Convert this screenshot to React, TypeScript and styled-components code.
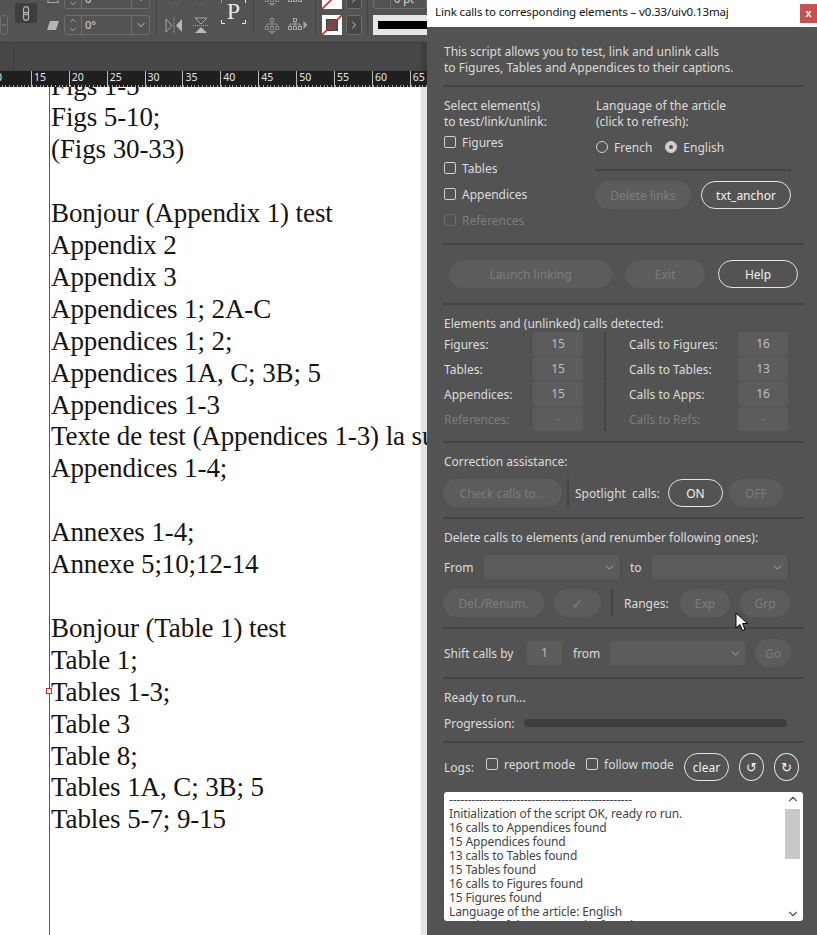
import styled, { createGlobalStyle } from "styled-components";
import { ChevronDown, ChevronRight, ChevronUp } from "lucide-react";

const GlobalStyle = createGlobalStyle`
    html, body {
        margin: 0;
        padding: 0;
        background: #535353;
    }
`;

const DOC_LINES = [
    "Figs 1-5",
    "Figs 5-10;",
    "(Figs 30-33)",
    "",
    "Bonjour (Appendix 1) test",
    "Appendix 2",
    "Appendix 3",
    "Appendices 1; 2A-C",
    "Appendices 1; 2;",
    "Appendices 1A, C; 3B; 5",
    "Appendices 1-3",
    "Texte de test (Appendices 1-3) la suite",
    "Appendices 1-4;",
    "",
    "Annexes 1-4;",
    "Annexe 5;10;12-14",
    "",
    "Bonjour (Table 1) test",
    "Table 1;",
    "Tables 1-3;",
    "Table 3",
    "Table 8;",
    "Tables 1A, C; 3B; 5",
    "Tables 5-7; 9-15",
];

const RULER_MARKS = [0, 15, 20, 25, 30, 35, 40, 45, 50, 55, 60, 65];

const LOG_LINES = [
    "-------------------------------------------------",
    "Initialization of the script OK, ready ro run.",
    "16 calls to Appendices found",
    "15 Appendices found",
    "13 calls to Tables found",
    "15 Tables found",
    "16 calls to Figures found",
    "15 Figures found",
    "Language of the article: English",
    "Number of the paragraphs found",
];

const COUNTS = [
    { label: "Figures:", value: "15", callLabel: "Calls to Figures:", callValue: "16" },
    { label: "Tables:", value: "15", callLabel: "Calls to Tables:", callValue: "13" },
    { label: "Appendices:", value: "15", callLabel: "Calls to Apps:", callValue: "16" },
    { label: "References:", value: "-", callLabel: "Calls to Refs:", callValue: "-", off: true },
];

const Screen = styled.div`
    display: flex;
    width: 817px;
    height: 935px;
    overflow: hidden;
`;

const LeftPane = styled.div`
    display: flex;
    flex-direction: column;
    width: 427px;
    flex: none;
    height: 935px;
    overflow: hidden;
`;

/* InDesign control bar */
const Toolbar = styled.div`
    display: flex;
    align-items: flex-end;
    height: 42px;
    padding-bottom: 7px;
    box-sizing: border-box;
    background: #535353;
    overflow: hidden;
    flex: none;
`;

const ToolColumn = styled.div<{ $w: number; $ml?: number; $gap?: number; $pb?: number }>`
    display: flex;
    flex-direction: column;
    justify-content: flex-end;
    align-items: center;
    gap: ${(p) => p.$gap ?? 6}px;
    width: ${(p) => p.$w}px;
    margin-left: ${(p) => p.$ml ?? 0}px;
    padding-bottom: ${(p) => p.$pb ?? 0}px;
    flex: none;
`;

const ToolSep = styled.div<{ $ml: number }>`
    width: 1px;
    height: 36px;
    background: #444;
    margin-left: ${(p) => p.$ml}px;
    flex: none;
`;

const ToolBox = styled.div<{ $w: number }>`
    display: flex;
    align-items: center;
    justify-content: flex-end;
    width: ${(p) => p.$w}px;
    height: 20px;
    flex: none;
    box-sizing: border-box;
    border: 1px solid #6e6e6e;
    border-radius: 3px;
    color: #d8d8d8;
    font: 11px "Noto Sans", sans-serif;
    overflow: hidden;
`;

const SpinPart = styled.div`
    display: flex;
    flex-direction: column;
    align-items: center;
    width: 16px;
    height: 100%;
    border-right: 1px solid #6e6e6e;
    color: #c8c8c8;
    flex: none;
`;

const ValuePart = styled.div`
    flex: 1;
    padding-left: 3px;
    line-height: 18px;
`;

const DropPart = styled.div`
    display: flex;
    align-items: center;
    justify-content: center;
    width: 17px;
    height: 100%;
    border-left: 1px solid #6e6e6e;
    color: #c8c8c8;
    flex: none;
`;

const LinkButton = styled.div`
    display: flex;
    align-items: center;
    justify-content: center;
    width: 22px;
    height: 20px;
    margin-bottom: 12px;
    margin-left: 7px;
    border-radius: 2px;
    background: #3e3e3e;
    flex: none;
`;

const Proxy = styled.div`
    position: relative;
    display: flex;
    align-items: center;
    justify-content: center;
    width: 25px;
    height: 25px;
    margin-left: 11px;
    margin-bottom: 11px;
    flex: none;
    color: #e8e8e8;
    font: 24px "Liberation Serif", serif;
`;

const ChevronBox = styled.div`
    display: flex;
    align-items: center;
    justify-content: center;
    width: 16px;
    height: 20px;
    box-sizing: border-box;
    border: 1px solid #6e6e6e;
    border-radius: 3px;
    background: #474747;
    color: #c8c8c8;
`;

const StrokePreview = styled.div`
    display: flex;
    align-items: center;
    width: 54px;
    height: 20px;
    padding-left: 5px;
    box-sizing: border-box;
    background: #e6e6e6;
    flex: none;
`;

const StrokeBar = styled.div`
    width: 100%;
    height: 8px;
    background: #000;
`;

const ToolStrip = styled.div`
    height: 29px;
    flex: none;
    box-sizing: border-box;
    border-top: 1px solid #3a3a3a;
    border-right: 6px solid #3e3e3e;
    background: #474747;
    display: flex;
`;

const StripCell = styled.div`
    width: 13px;
    border-right: 1px solid #3e3e3e;
`;

const Ruler = styled.div`
    display: flex;
    height: 16px;
    flex: none;
    background: #1f1f1f;
    overflow: hidden;
`;

const RulerCell = styled.div`
    width: 37.9px;
    flex: none;
    height: 16px;
    box-sizing: border-box;
    padding-left: 2px;
    border-left: 1px solid #bdbdbd;
    color: #e6e6e6;
    font: 10.5px/12px "Noto Sans", sans-serif;
    background: repeating-linear-gradient(
            to right,
            #a8a8a8 0,
            #a8a8a8 1px,
            transparent 1px,
            transparent 3.79px
        )
        bottom left / 100% 2px no-repeat;
    &:first-child {
        margin-left: -7px;
    }
`;

const Pasteboard = styled.div`
    display: flex;
    flex: 1;
    min-height: 0;
    background: #fff;
    border-right: 6px solid #e4e4e4;
    padding-left: 49px;
`;

const DocPage = styled.div`
    flex: 1;
    min-width: 0;
    border-left: 1px solid #d8232a;
    padding-left: 1px;
    margin-right: -6px;
    clip-path: inset(0 0 0 -6px);
`;

const DocFlow = styled.div`
    margin-top: -17.5px;
`;

const DocLine = styled.div`
    position: relative;
    height: 31.92px;
    color: #141414;
    font: 27px/32px "Liberation Serif", serif;
    letter-spacing: -0.1px;
    white-space: nowrap;
`;

const DocPort = styled.span`
    position: absolute;
    left: -5px;
    top: 12px;
    width: 6px;
    height: 6px;
    box-sizing: border-box;
    border: 1px solid #d8232a;
    background: #fff;
`;

/* Script dialog */
const Dialog = styled.div`
    position: relative;
    width: 390px;
    flex: none;
    height: 935px;
    background: #535353;
    font: 12px/16px "Noto Sans", sans-serif;
    color: #dcdcdc;
`;

const TitleBar = styled.div`
    display: flex;
    justify-content: space-between;
    height: 27px;
    padding-left: 8px;
    box-sizing: border-box;
    background: #fff;
    color: #111;
    font-size: 11.5px;
    letter-spacing: -0.14px;
    line-height: 24px;
`;

const CloseButton = styled.div`
    width: 17px;
    height: 19px;
    margin-top: 4px;
    background: #c75050;
    color: #fff;
    font: bold 11px/18px "Liberation Sans", sans-serif;
    text-align: center;
`;

const Section = styled.section<{ $h: number; $last?: boolean }>`
    height: ${(p) => p.$h}px;
    margin-left: 16px;
    margin-right: 13px;
    padding-top: 10px;
    padding-left: 1px;
    box-sizing: border-box;
    border-bottom: ${(p) => (p.$last ? "none" : "2px solid #444")};
`;

const Heading = styled.div`
    padding-top: 1px;
    margin-bottom: -1px;
`;

const Intro = styled.div`
    margin-top: 7px;
`;

const Columns = styled.div`
    display: grid;
    grid-template-columns: 152px 1fr;
`;

const CheckRow = styled.label<{ $off?: boolean }>`
    display: flex;
    align-items: center;
    gap: 6px;
    height: 26px;
    color: ${(p) => (p.$off ? "#7d7d7d" : "#dcdcdc")};
`;

const CheckBox = styled.span<{ $off?: boolean }>`
    width: 12px;
    height: 12px;
    box-sizing: border-box;
    border: 1px solid ${(p) => (p.$off ? "#6e6e6e" : "#cfcfcf")};
    border-radius: 2px;
    flex: none;
`;

const RadioRow = styled.div`
    display: flex;
    align-items: center;
    height: 24px;
    margin-top: 6px;
`;

const Radio = styled.span<{ $on?: boolean; $ml?: number }>`
    display: flex;
    align-items: center;
    justify-content: center;
    width: 12px;
    height: 12px;
    box-sizing: border-box;
    border-radius: 50%;
    border: 1px solid #cfcfcf;
    background: ${(p) => (p.$on ? "#cfcfcf" : "transparent")};
    margin-left: ${(p) => p.$ml ?? 0}px;
    margin-right: 6px;
    flex: none;
    &::after {
        content: "";
        display: ${(p) => (p.$on ? "block" : "none")};
        width: 4px;
        height: 4px;
        border-radius: 50%;
        background: #535353;
    }
`;

const InnerRule = styled.div`
    width: 196px;
    height: 2px;
    margin: 10px 0 10px -1px;
    background: #444;
`;

const ButtonRow = styled.div<{ $mt?: number; $ml?: number }>`
    display: flex;
    align-items: center;
    height: 28px;
    margin-top: ${(p) => p.$mt ?? 0}px;
    margin-left: ${(p) => p.$ml ?? 0}px;
`;

const Pill = styled.div<{ $w: number; $on?: boolean; $ml?: number; $mr?: number }>`
    display: flex;
    align-items: center;
    justify-content: center;
    width: ${(p) => p.$w}px;
    height: 28px;
    margin-left: ${(p) => p.$ml ?? 0}px;
    margin-right: ${(p) => p.$mr ?? 0}px;
    padding-top: 2px;
    box-sizing: border-box;
    border-radius: 14px;
    flex: none;
    border: 1px solid ${(p) => (p.$on ? "#e4e4e4" : "transparent")};
    background: ${(p) => (p.$on ? "transparent" : "#5c5c5c")};
    color: ${(p) => (p.$on ? "#f2f2f2" : "#7d7d7d")};
`;

const CheckGlyph = styled.span`
    font: 15px "DejaVu Sans", sans-serif;
`;

const Divider = styled.div<{ $ml: number; $mr: number }>`
    width: 2px;
    height: 28px;
    margin-left: ${(p) => p.$ml}px;
    margin-right: ${(p) => p.$mr}px;
    background: #444;
    flex: none;
`;

const CountRow = styled.div`
    display: grid;
    grid-template-columns: 89px 50px 21px 2px 23px 109px 50px;
    align-items: center;
    height: 24px;
    margin-top: 1px;
`;

const CountLabel = styled.div<{ $off?: boolean }>`
    padding-top: 2px;
    color: ${(p) => (p.$off ? "#7d7d7d" : "#dcdcdc")};
`;

const CountValue = styled.div<{ $off?: boolean }>`
    height: 24px;
    border-radius: 3px;
    background: #5c5c5c;
    color: ${(p) => (p.$off ? "#7d7d7d" : "#bdbdbd")};
    text-align: center;
    line-height: 24px;
`;

const CountRule = styled.div`
    grid-column: 4;
    width: 2px;
    height: 24px;
    background: #444;
`;

const Plain = styled.span<{ $w?: number; $ml?: number }>`
    flex: none;
    width: ${(p) => (p.$w ? `${p.$w}px` : "auto")};
    margin-left: ${(p) => p.$ml ?? 0}px;
    padding-top: 2px;
    white-space: pre;
`;

const FieldRow = styled.div<{ $mt?: number }>`
    display: flex;
    align-items: center;
    height: 24px;
    margin-top: ${(p) => p.$mt ?? 0}px;
`;

const SelectBox = styled.div<{ $w: number }>`
    display: flex;
    align-items: center;
    justify-content: flex-end;
    width: ${(p) => p.$w}px;
    height: 24px;
    padding-right: 3px;
    box-sizing: border-box;
    border-radius: 2px;
    background: #5c5c5c;
    color: #bdbdbd;
    flex: none;
`;

const NumberInput = styled.div`
    width: 35px;
    height: 24px;
    border-radius: 2px;
    background: #5c5c5c;
    color: #bdbdbd;
    text-align: center;
    line-height: 24px;
    flex: none;
`;

const ShiftRow = styled.div`
    display: flex;
    align-items: center;
    height: 28px;
`;

const ProgressRow = styled.div`
    display: flex;
    align-items: center;
    height: 16px;
    margin-top: 10px;
`;

const ProgressBar = styled.div`
    width: 263px;
    height: 8px;
    border-radius: 4px;
    background: #3d3d3d;
    flex: none;
`;

const LogsRow = styled.div`
    display: flex;
    align-items: center;
    height: 28px;
`;

const LogCheck = styled.label<{ $w: number }>`
    display: flex;
    align-items: center;
    gap: 6px;
    width: ${(p) => p.$w}px;
    height: 16px;
    margin-top: -6px;
    flex: none;
`;

const RoundButton = styled.div<{ $ml: number }>`
    display: flex;
    align-items: center;
    justify-content: center;
    width: 25px;
    height: 28px;
    margin-left: ${(p) => p.$ml}px;
    box-sizing: border-box;
    border: 1px solid #e4e4e4;
    border-radius: 50%;
    color: #f2f2f2;
    font: 13px "DejaVu Sans", sans-serif;
    flex: none;
`;

const LogBox = styled.div`
    display: flex;
    width: 359px;
    height: 129px;
    margin-top: 11px;
    box-sizing: border-box;
    border-radius: 3px;
    background: #fff;
    overflow: hidden;
`;

const LogText = styled.div`
    flex: 1;
    min-width: 0;
    padding: 1px 0 0 5px;
    color: #444;
    letter-spacing: -0.13px;
    line-height: 14px;
    white-space: nowrap;
    overflow: hidden;
`;

const LogScroll = styled.div`
    display: flex;
    flex-direction: column;
    align-items: center;
    width: 15px;
    margin-right: 3px;
    flex: none;
    color: #555;
`;

const ScrollThumb = styled.div`
    width: 15px;
    height: 50px;
    margin-top: 3px;
    background: #c8c8c8;
`;

const ScrollSpacer = styled.div`
    flex: 1;
`;

const Pointer = styled.svg`
    position: absolute;
    left: 308px;
    top: 612px;
`;

const ProxyFrame = styled.svg`
    position: absolute;
    inset: 0;
`;

const ShearIcon = () => (
    <svg width="12" height="9" viewBox="0 0 12 9">
        <path d="M3 0h9l-3 9H0z" fill="#b4b4b4" />
    </svg>
);

const SlantIcon = () => (
    <svg width="12" height="9" viewBox="0 0 12 9">
        <path d="M3 .5h6l2.5 8H.5z" fill="none" stroke="#aaa" />
    </svg>
);

const FlipHorizontal = () => (
    <svg width="18" height="17" viewBox="0 0 18 17">
        <path d="M1 2l6 6.5L1 15z" fill="none" stroke="#a8a8a8" />
        <path d="M17 2l-6 6.5 6 6.5z" fill="#b8b8b8" />
        <path d="M9 0v17" stroke="#a8a8a8" strokeDasharray="1 1" />
    </svg>
);

const FlipVertical = () => (
    <svg width="16" height="17" viewBox="0 0 16 17">
        <path d="M2 1h12L8 7z" fill="none" stroke="#a8a8a8" />
        <path d="M2 16h12L8 10z" fill="#b8b8b8" />
        <path d="M0 8.5h16" stroke="#a8a8a8" strokeDasharray="1 1" />
    </svg>
);

const DashedCircle = () => (
    <svg width="18" height="7" viewBox="0 0 18 7">
        <circle cx="9" cy="-2" r="8" fill="none" stroke="#777" strokeDasharray="1.5 1.5" />
    </svg>
);

const Tree = ({ arrow, dim }: { arrow: "down" | "right" | "left"; dim?: boolean }) => {
    const color = dim ? "#8a8a8a" : "#a8a8a8";
    return (
        <svg width="20" height="16" viewBox="0 0 20 16" fill="none" stroke={color}>
            <rect x="5.5" y="0.5" width="3" height="3" />
            <path d="M7 4v2M2 6h10M2 6v2M7 6v2M12 6v2" />
            <rect x="0.5" y="8.5" width="3" height="3" />
            <rect x="5.5" y="8.5" width="3" height="3" />
            <rect x="10.5" y="8.5" width="3" height="3" />
            {arrow === "down" && <path d="M3 13h8l-4 3z" fill={color} stroke="none" />}
            {arrow === "right" && <path d="M15.5 3l4 4-4 4z" fill={color} stroke="none" />}
            {arrow === "left" && <path d="M4 0L0 3l4 3z" fill={color} stroke="none" />}
        </svg>
    );
};

const Swatch = ({ stroke }: { stroke?: boolean }) => (
    <svg width="20" height="20" viewBox="0 0 20 20">
        <rect width="20" height="20" fill="#fff" />
        {stroke && <rect x="4.5" y="4.5" width="11" height="11" fill="#555" stroke="#444" />}
        <path d="M0 20L20 0" stroke="#ee1c25" strokeWidth="1.6" />
    </svg>
);

const LinkIcon = () => (
    <svg width="8" height="15" viewBox="0 0 8 15" fill="none" stroke="#b0b0b0" strokeWidth="1.3">
        <rect x="1.5" y="0.7" width="5" height="8" rx="2.5" />
        <rect x="1.5" y="6.3" width="5" height="8" rx="2.5" />
    </svg>
);

const ProxyCorners = () => (
    <ProxyFrame width="25" height="25" viewBox="0 0 25 25">
        <path
            d="M0 4V.5H4M21 .5H24.5V4M24.5 21V24.5H21M4 24.5H.5V21"
            fill="none"
            stroke="#eee"
        />
    </ProxyFrame>
);

const SelectChevron = () => <ChevronDown size={13} strokeWidth={1.5} />;

const App = () => {
    return (
        <Screen>
            <GlobalStyle />
            <LeftPane>
                <Toolbar>
                    <ToolColumn $w={8}>
                        <ToolBox $w={8}>
                            <ChevronDown size={10} />
                        </ToolBox>
                    </ToolColumn>
                    <LinkButton>
                        <LinkIcon />
                    </LinkButton>
                    <ToolColumn $w={12} $ml={10} $gap={18} $pb={5}>
                        <SlantIcon />
                        <ShearIcon />
                    </ToolColumn>
                    <ToolColumn $w={86} $ml={5}>
                        {[0, 1].map((row) => (
                            <ToolBox $w={86} key={row}>
                                <SpinPart>
                                    <ChevronUp size={10} />
                                    <ChevronDown size={10} />
                                </SpinPart>
                                <ValuePart>0°</ValuePart>
                                <DropPart>
                                    <ChevronDown size={12} />
                                </DropPart>
                            </ToolBox>
                        ))}
                    </ToolColumn>
                    <ToolSep $ml={6} />
                    <ToolColumn $w={18} $ml={8} $gap={12} $pb={1}>
                        <DashedCircle />
                        <FlipHorizontal />
                    </ToolColumn>
                    <ToolColumn $w={18} $ml={9} $gap={12} $pb={1}>
                        <DashedCircle />
                        <FlipVertical />
                    </ToolColumn>
                    <Proxy>
                        <ProxyCorners />P
                    </Proxy>
                    <ToolSep $ml={7} />
                    <ToolColumn $w={20} $ml={11} $gap={12} $pb={1}>
                        <Tree arrow="down" dim />
                        <Tree arrow="down" dim />
                    </ToolColumn>
                    <ToolColumn $w={20} $ml={3} $gap={12} $pb={1}>
                        <Tree arrow="left" />
                        <Tree arrow="right" />
                    </ToolColumn>
                    <ToolSep $ml={7} />
                    <ToolColumn $w={20} $ml={6}>
                        <Swatch />
                        <Swatch stroke />
                    </ToolColumn>
                    <ToolColumn $w={16} $ml={4}>
                        <ChevronBox>
                            <ChevronRight size={12} />
                        </ChevronBox>
                        <ChevronBox>
                            <ChevronRight size={12} />
                        </ChevronBox>
                    </ToolColumn>
                    <ToolSep $ml={5} />
                    <ToolColumn $w={54} $ml={5}>
                        <ToolBox $w={54}>
                            <SpinPart>
                                <ChevronDown size={10} />
                            </SpinPart>
                            <ValuePart>0 pt</ValuePart>
                        </ToolBox>
                        <StrokePreview>
                            <StrokeBar />
                        </StrokePreview>
                    </ToolColumn>
                </Toolbar>
                <ToolStrip>
                    <StripCell />
                </ToolStrip>
                <Ruler>
                    {RULER_MARKS.map((mark) => (
                        <RulerCell key={mark}>{mark}</RulerCell>
                    ))}
                </Ruler>
                <Pasteboard>
                    <DocPage>
                        <DocFlow>
                            {DOC_LINES.map((line, i) => (
                                <DocLine key={i}>
                                    {line === "Tables 1-3;" && <DocPort />}
                                    {line}
                                </DocLine>
                            ))}
                        </DocFlow>
                    </DocPage>
                </Pasteboard>
            </LeftPane>
            <Dialog>
                <TitleBar>
                    Link calls to corresponding elements – v0.33/uiv0.13maj
                    <CloseButton>x</CloseButton>
                </TitleBar>
                <Section $h={60}>
                    <Intro>
                        This script allows you to test, link and unlink calls
                        <br />
                        to Figures, Tables and Appendices to their captions.
                    </Intro>
                </Section>
                <Section $h={158}>
                    <Columns>
                        <div>
                            <Heading>
                                Select element(s)
                                <br />
                                to test/link/unlink:
                            </Heading>
                            {["Figures", "Tables", "Appendices"].map((name) => (
                                <CheckRow key={name}>
                                    <CheckBox />
                                    <Plain>{name}</Plain>
                                </CheckRow>
                            ))}
                            <CheckRow $off>
                                <CheckBox $off />
                                <Plain>References</Plain>
                            </CheckRow>
                        </div>
                        <div>
                            <Heading>
                                Language of the article
                                <br />
                                (click to refresh):
                            </Heading>
                            <RadioRow>
                                <Radio />
                                <Plain>French</Plain>
                                <Radio $on $ml={13} />
                                <Plain>English</Plain>
                            </RadioRow>
                            <InnerRule />
                            <ButtonRow $ml={-1}>
                                <Pill $w={96} $mr={10}>
                                    Delete links
                                </Pill>
                                <Pill $w={90} $on>
                                    txt_anchor
                                </Pill>
                            </ButtonRow>
                        </div>
                    </Columns>
                </Section>
                <Section $h={60}>
                    <ButtonRow $mt={5} $ml={5}>
                        <Pill $w={163} $mr={13}>
                            Launch linking
                        </Pill>
                        <Pill $w={80} $mr={13}>
                            Exit
                        </Pill>
                        <Pill $w={80} $on>
                            Help
                        </Pill>
                    </ButtonRow>
                </Section>
                <Section $h={138}>
                    <Heading>Elements and (unlinked) calls detected:</Heading>
                    {COUNTS.map((row) => (
                        <CountRow key={row.label}>
                            <CountLabel $off={row.off}>{row.label}</CountLabel>
                            <CountValue $off={row.off}>{row.value}</CountValue>
                            <CountRule />
                            <span />
                            <CountLabel $off={row.off}>{row.callLabel}</CountLabel>
                            <CountValue $off={row.off}>{row.callValue}</CountValue>
                        </CountRow>
                    ))}
                </Section>
                <Section $h={76}>
                    <Heading>Correction assistance:</Heading>
                    <ButtonRow $mt={10} $ml={-1}>
                        <Pill $w={119}>Check calls to...</Pill>
                        <Divider $ml={5} $mr={6} />
                        <Plain $w={93}>Spotlight  calls:</Plain>
                        <Pill $w={55} $on $mr={6}>
                            ON
                        </Pill>
                        <Pill $w={54}>OFF</Pill>
                    </ButtonRow>
                </Section>
                <Section $h={110}>
                    <Heading>Delete calls to elements (and renumber following ones):</Heading>
                    <FieldRow $mt={10}>
                        <Plain $w={40}>From</Plain>
                        <SelectBox $w={135}>
                            <SelectChevron />
                        </SelectBox>
                        <Plain $w={22} $ml={11}>
                            to
                        </Plain>
                        <SelectBox $w={135}>
                            <SelectChevron />
                        </SelectBox>
                    </FieldRow>
                    <ButtonRow $mt={10} $ml={-1}>
                        <Pill $w={101} $mr={10}>
                            Del./Renum.
                        </Pill>
                        <Pill $w={47}>
                            <CheckGlyph>✓</CheckGlyph>
                        </Pill>
                        <Divider $ml={10} $mr={11} />
                        <Plain $w={56}>Ranges:</Plain>
                        <Pill $w={50} $mr={10}>
                            Exp
                        </Pill>
                        <Pill $w={50}>Grp</Pill>
                    </ButtonRow>
                </Section>
                <Section $h={50}>
                    <ShiftRow>
                        <Plain $w={83}>Shift calls by</Plain>
                        <NumberInput>1</NumberInput>
                        <Plain $w={37} $ml={11}>
                            from
                        </Plain>
                        <SelectBox $w={135}>
                            <SelectChevron />
                        </SelectBox>
                        <Pill $w={36} $ml={10}>
                            Go
                        </Pill>
                    </ShiftRow>
                </Section>
                <Section $h={64}>
                    <Heading>Ready to run...</Heading>
                    <ProgressRow>
                        <Plain $w={80}>Progression:</Plain>
                        <ProgressBar />
                    </ProgressRow>
                </Section>
                <Section $h={192} $last>
                    <LogsRow>
                        <Plain $w={42}>Logs:</Plain>
                        <LogCheck $w={100}>
                            <CheckBox />
                            <Plain>report mode</Plain>
                        </LogCheck>
                        <LogCheck $w={98}>
                            <CheckBox />
                            <Plain>follow mode</Plain>
                        </LogCheck>
                        <Pill $w={45} $on>
                            clear
                        </Pill>
                        <RoundButton $ml={10}>↺</RoundButton>
                        <RoundButton $ml={10}>↻</RoundButton>
                    </LogsRow>
                    <LogBox>
                        <LogText>
                            {LOG_LINES.map((line, i) => (
                                <div key={i}>{line}</div>
                            ))}
                        </LogText>
                        <LogScroll>
                            <ChevronUp size={14} />
                            <ScrollThumb />
                            <ScrollSpacer />
                            <ChevronDown size={14} />
                        </LogScroll>
                    </LogBox>
                </Section>
                <Pointer width="14" height="20" viewBox="0 0 14 20">
                    <path
                        d="M1 1v15l4-3.5 2.5 6 2.5-1-2.5-6H12.5z"
                        fill="#fff"
                        stroke="#000"
                    />
                </Pointer>
            </Dialog>
        </Screen>
    );
};

export default App;
